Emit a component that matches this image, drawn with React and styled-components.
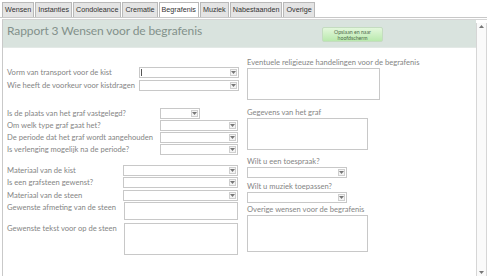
import React from "react";
import styled, { createGlobalStyle } from "styled-components";

const GlobalStyle = createGlobalStyle`
  html, body {
    margin: 0;
    padding: 0;
    background: #ffffff;
    font-family: Lato, "Liberation Sans", sans-serif;
  }
`;

const Page = styled.div`
  width: 487px;
  height: 276px;
  overflow: hidden;
  display: flex;
  flex-direction: column;
`;

const TabBar = styled.div`
  display: flex;
  padding: 2px 0 0 2px;
  height: 15px;
  border-bottom: 1px solid #c8c8c8;
`;

const Tab = styled.div`
  height: 15px;
  padding: 0 2px;
  margin-right: 1px;
  box-sizing: border-box;
  border: 1px solid #b9b9b9;
  border-bottom: none;
  background: ${(p) => (p.active ? "#ffffff" : "#e4e4e4")};
  font-family: "Liberation Sans", sans-serif;
  font-size: 7.2px;
  line-height: 14px;
  color: #333;
  white-space: nowrap;
`;

const Frame = styled.div`
  flex: 1;
  display: flex;
  margin: 1px 0 0 2px;
  border-left: 1px solid #c9c9c9;
  border-top: 1px solid #d4d4d4;
  min-height: 0;
`;

const Content = styled.div`
  flex: 1;
  display: flex;
  flex-direction: column;
`;

const Header = styled.div`
  height: 27px;
  background: #d9e3de;
  display: flex;
  align-items: center;
  justify-content: space-between;
  padding: 0 0 0 4px;
  border-bottom: 1px solid #e3e9e6;
`;

const Title = styled.div`
  font-size: 12px;
  color: #83918b;
  letter-spacing: -0.1px;
  margin-top: -6px;
`;

const SaveButton = styled.div`
  width: 61px;
  height: 15px;
  margin-right: 93px;
  margin-top: 1px;
  box-sizing: border-box;
  border: 1px solid #c4dcc0;
  border-radius: 2px;
  background: linear-gradient(#e3f7dc, #b9e9ad);
  font-size: 5.2px;
  line-height: 6px;
  color: #4f6b4b;
  text-align: center;
  padding-top: 1px;
`;

const Body = styled.div`
  flex: 1;
  display: grid;
  grid-template-columns: 240px 1fr;
  padding: 0 0 0 4px;
`;

const Column = styled.div`
  display: flex;
  flex-direction: column;
`;

const Row = styled.div`
  display: flex;
  align-items: flex-start;
  height: ${(p) => p.h || 12}px;
  margin-top: ${(p) => p.gap || 0}px;
`;

const Label = styled.div`
  width: ${(p) => p.w}px;
  font-size: 7.6px;
  line-height: 10px;
  color: #858585;
  white-space: nowrap;
`;

const Combo = styled.div`
  width: ${(p) => p.w}px;
  height: 11px;
  box-sizing: border-box;
  border: 1px solid #c8c8c8;
  background: #fff;
  display: flex;
  justify-content: flex-end;
  position: relative;
`;

const Arrow = styled.div`
  width: 7px;
  height: 7px;
  margin: 1px 1px 0 0;
  box-sizing: border-box;
  border: 1px solid #cfcfcf;
  background: #f4f4f4;
  display: flex;
  align-items: center;
  justify-content: center;
`;

const Caret = styled.div`
  position: absolute;
  left: 1px;
  top: 1px;
  width: 1px;
  height: 7px;
  background: #555;
`;

const TextBox = styled.div`
  width: ${(p) => p.w}px;
  height: ${(p) => p.h}px;
  box-sizing: border-box;
  border: 1px solid #c8c8c8;
  background: #fff;
`;

const FieldLabel = styled.div`
  font-size: 7.6px;
  line-height: 10px;
  color: #858585;
  white-space: nowrap;
  margin-top: ${(p) => p.gap || 0}px;
  margin-bottom: 1px;
`;

const ScrollBar = styled.div`
  width: 9px;
  margin-top: 3px;
  border-left: 1px solid #d6d6d6;
  border-right: 1px solid #d6d6d6;
  background: #fafafa;
  display: flex;
  flex-direction: column;
  justify-content: space-between;
  align-items: center;
`;

const ScrollButton = styled.div`
  width: 7px;
  height: 7px;
  display: flex;
  align-items: center;
  justify-content: center;
`;

const ArrowIcon = ({ up }) => (
  <svg width="5" height="3" viewBox="0 0 5 3">
    <path d={up ? "M0 3 L2.5 0 L5 3 Z" : "M0 0 L2.5 3 L5 0 Z"} fill="#777" />
  </svg>
);

const Select = ({ w, caret }) => (
  <Combo w={w}>
    {caret && <Caret />}
    <Arrow>
      <ArrowIcon />
    </Arrow>
  </Combo>
);

const tabs = [
  "Wensen",
  "Instanties",
  "Condoleance",
  "Crematie",
  "Begrafenis",
  "Muziek",
  "Nabestaanden",
  "Overige",
];

export default function App() {
  return (
    <>
      <GlobalStyle />
      <Page>
        <TabBar>
          {tabs.map((t) => (
            <Tab key={t} active={t === "Begrafenis"}>
              {t}
            </Tab>
          ))}
        </TabBar>
        <Frame>
          <Content>
            <Header>
              <Title>Rapport 3 Wensen voor de begrafenis</Title>
              <SaveButton>
                Opslaan en naar
                <br />
                hoofdscherm
              </SaveButton>
            </Header>
            <Body>
              <Column>
                <Row gap={19}>
                  <Label w={132}>Vorm van transport voor de kist</Label>
                  <Select w={100} caret />
                </Row>
                <Row gap={1}>
                  <Label w={132}>Wie heeft de voorkeur voor kistdragen</Label>
                  <Select w={100} />
                </Row>
                <Row gap={16}>
                  <Label w={153}>Is de plaats van het graf vastgelegd?</Label>
                  <Select w={40} />
                </Row>
                <Row>
                  <Label w={153}>Om welk type graf gaat het?</Label>
                  <Select w={78} />
                </Row>
                <Row>
                  <Label w={153}>De periode dat het graf wordt aangehouden</Label>
                  <Select w={78} />
                </Row>
                <Row>
                  <Label w={153}>Is verlenging mogelijk na de periode?</Label>
                  <Select w={78} />
                </Row>
                <Row gap={9}>
                  <Label w={116}>Materiaal van de kist</Label>
                  <Select w={115} />
                </Row>
                <Row>
                  <Label w={116}>Is een grafsteen gewenst?</Label>
                  <Select w={115} />
                </Row>
                <Row gap={1}>
                  <Label w={116}>Materiaal van de steen</Label>
                  <Select w={115} />
                </Row>
                <Row h={18}>
                  <Label w={117}>Gewenste afmeting van de steen</Label>
                  <TextBox w={114} h={18} />
                </Row>
                <Row h={32} gap={3}>
                  <Label w={117}>Gewenste tekst voor op de steen</Label>
                  <TextBox w={114} h={32} />
                </Row>
              </Column>
              <Column>
                <FieldLabel gap={9}>
                  Eventuele religieuze handelingen voor de begrafenis
                </FieldLabel>
                <TextBox w={133} h={32} />
                <FieldLabel gap={7}>Gegevens van het graf</FieldLabel>
                <TextBox w={121} h={32} />
                <FieldLabel gap={6}>Wilt u een toespraak?</FieldLabel>
                <Select w={100} />
                <FieldLabel gap={3}>Wilt u muziek toepassen?</FieldLabel>
                <Select w={100} />
                <FieldLabel gap={1}>Overige wensen voor de begrafenis</FieldLabel>
                <TextBox w={121} h={37} />
              </Column>
            </Body>
          </Content>
          <ScrollBar>
            <ScrollButton>
              <ArrowIcon up />
            </ScrollButton>
            <ScrollButton>
              <ArrowIcon />
            </ScrollButton>
          </ScrollBar>
        </Frame>
      </Page>
    </>
  );
}
